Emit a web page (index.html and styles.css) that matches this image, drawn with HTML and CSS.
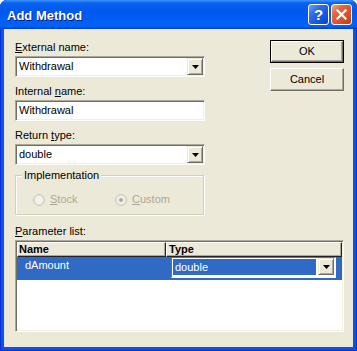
FILE: index.html
```html
<!DOCTYPE html>
<html>
<head>
<meta charset="utf-8">
<link rel="stylesheet" href="styles.css">
</head>
<body>
<div class="window">
  <div class="titlebar">
    <span class="title">Add Method</span>
    <div class="tb-btn help">?</div>
    <div class="tb-btn close">
      <svg width="11" height="11" viewBox="0 0 11 11"><path d="M1.5 1.5 L9.5 9.5 M9.5 1.5 L1.5 9.5" stroke="#fff" stroke-width="2.2" stroke-linecap="square" fill="none"/></svg>
    </div>
  </div>
  <div class="client">
    <div class="top">
      <div class="fields">
        <div class="lbl"><u>E</u>xternal name:</div>
        <div class="box combo">
          <div class="box-text">Withdrawal</div>
          <div class="dd"><svg width="7" height="4" viewBox="0 0 7 4"><path d="M0 0H7L3.5 4Z" fill="#000"/></svg></div>
        </div>
        <div class="lbl">Internal <u>n</u>ame:</div>
        <div class="box edit"><div class="box-text">Withdrawal</div></div>
        <div class="lbl">Return <u>t</u>ype:</div>
        <div class="box combo last">
          <div class="box-text">double</div>
          <div class="dd"><svg width="7" height="4" viewBox="0 0 7 4"><path d="M0 0H7L3.5 4Z" fill="#000"/></svg></div>
        </div>
        <fieldset class="group">
          <legend>Implementation</legend>
          <div class="radios">
            <div class="radio"><span class="circle"></span><span><u>S</u>tock</span></div>
            <div class="radio"><span class="circle checked"></span><span><u>C</u>ustom</span></div>
          </div>
        </fieldset>
      </div>
      <div class="buttons">
        <div class="btn default"><span class="btn-in">OK</span></div>
        <div class="btn"><span class="btn-in">Cancel</span></div>
      </div>
    </div>
    <div class="lbl plbl"><u>P</u>arameter list:</div>
    <div class="listview">
      <div class="header">
        <div class="hcell hname">Name</div>
        <div class="hcell htype">Type</div>
      </div>
      <div class="row">
        <div class="cell cname">dAmount</div>
        <div class="cell ctype">
          <div class="rcombo">
            <div class="rsel">double</div>
            <div class="dd rdd"><svg width="7" height="4" viewBox="0 0 7 4"><path d="M0 0H7L3.5 4Z" fill="#000"/></svg></div>
          </div>
        </div>
      </div>
    </div>
  </div>
</div>
</body>
</html>
```

FILE: styles.css
```css
html, body {
  margin: 0;
  padding: 0;
  background: #ffffff;
}
body {
  font-family: "Liberation Sans", Arial, sans-serif;
  font-size: 11px;
  color: #000;
}
.window {
  width: 357px;
  height: 351px;
  box-sizing: border-box;
  display: flex;
  flex-direction: column;
  background: #0B53E2;
  border-radius: 7px 7px 0 0;
  box-shadow: inset 1px 0 #0831D9, inset -1px 0 #0831D9, inset 0 -1px #0831D9;
  overflow: hidden;
}
.titlebar {
  height: 29px;
  flex: none;
  display: flex;
  align-items: center;
  padding: 0 5px 0 7px;
  background: linear-gradient(to bottom, #3D95FF 0%, #0A62F0 10%, #0058EE 40%, #0062F8 85%, #0060F6 92%, #0045D8 96%, #0040D4 100%);
  border-radius: 7px 7px 0 0;
}
.title {
  flex: 1;
  color: #fff;
  font: bold 13px "Liberation Sans", Arial, sans-serif;
  text-shadow: 1px 1px #0A1883;
  padding-top: 1px;
}
.tb-btn {
  width: 21px;
  height: 21px;
  box-sizing: border-box;
  border: 1px solid #fff;
  border-radius: 3px;
  margin-left: 2px;
  display: flex;
  align-items: center;
  justify-content: center;
}
.help {
  background: linear-gradient(135deg, #6E9CF8 0%, #2F6BEA 35%, #1A55DE 65%, #0A44CF 100%);
  color: #fff;
  font: bold 15px "Liberation Sans", Arial, sans-serif;
}
.close {
  background: linear-gradient(135deg, #F3A588 0%, #E5663F 30%, #DD4F25 65%, #C43C16 100%);
}
.client {
  flex: 1;
  margin: 0 4px 4px 4px;
  background: #ECE9D8;
  padding: 12px 9px 0 11px;
  display: flex;
  flex-direction: column;
}
.top {
  display: flex;
}
.fields {
  width: 190px;
  display: flex;
  flex-direction: column;
}
.lbl {
  line-height: 13px;
  height: 13px;
  margin-bottom: 2px;
  white-space: nowrap;
}
u {
  text-decoration: underline;
  text-underline-offset: 1px;
}
.box {
  height: 21px;
  box-sizing: border-box;
  border: 1px solid;
  border-color: #ACA899 #fff #fff #ACA899;
  box-shadow: inset 1px 1px #716F64, inset -1px -1px #F1EFE2;
  background: #fff;
  display: flex;
  padding: 1px;
  margin-bottom: 8px;
}
.box.last {
  margin-bottom: 4px;
}
.box-text {
  flex: 1;
  line-height: 17px;
  padding-left: 2px;
}
.dd {
  width: 16px;
  height: 17px;
  box-sizing: border-box;
  background: #ECE9D8;
  border: 1px solid;
  border-color: #ECE9D8 #716F64 #716F64 #ECE9D8;
  box-shadow: inset 1px 1px #fff, inset -1px -1px #ACA899;
  display: flex;
  align-items: center;
  justify-content: center;
}
.group {
  margin: 0;
  width: 189px;
  box-sizing: border-box;
  border: 1px solid #D0D0BF;
  box-shadow: inset 1px 1px #fff, 1px 1px #fff;
  padding: 11px 0 8px 0;
}
.group legend {
  margin-left: 6px;
  padding: 0 2px;
  line-height: 13px;
  background: #ECE9D8;
}
.radios {
  display: flex;
  padding-left: 17px;
}
.radio {
  width: 82px;
  display: flex;
  align-items: center;
  gap: 5px;
  color: #ACA899;
  line-height: 13px;
}
.circle {
  width: 12px;
  height: 12px;
  box-sizing: border-box;
  border-radius: 50%;
  border: 1px solid #CBC8B9;
  box-shadow: inset 0 0 0 1px #E2E0D3;
  background: #F3F2EC;
  display: flex;
  align-items: center;
  justify-content: center;
}
.circle.checked::after {
  content: "";
  width: 4px;
  height: 4px;
  border-radius: 50%;
  background: #ACA899;
}
.buttons {
  margin-left: auto;
  margin-top: -1px;
  width: 74px;
  display: flex;
  flex-direction: column;
  gap: 5px;
}
.btn {
  height: 23px;
  box-sizing: border-box;
  border: 1px solid;
  border-color: #fff #716F64 #716F64 #fff;
  box-shadow: inset -1px -1px #ACA899;
  display: flex;
}
.btn-in {
  flex: 1;
  display: flex;
  align-items: center;
  justify-content: center;
  padding-bottom: 1px;
}
.btn.default {
  border: 1px solid #000;
  box-shadow: none;
}
.btn.default .btn-in {
  border: 1px solid;
  border-color: #fff #716F64 #716F64 #fff;
  box-shadow: inset -1px -1px #ACA899;
}
.plbl {
  margin-top: 10px;
}
.listview {
  height: 92px;
  box-sizing: border-box;
  border: 1px solid;
  border-color: #ACA899 #fff #fff #ACA899;
  box-shadow: inset 1px 1px #716F64, inset -1px -1px #F1EFE2;
  background: #fff;
  padding: 1px;
  display: flex;
  flex-direction: column;
}
.header {
  display: flex;
  height: 15px;
}
.hcell {
  box-sizing: border-box;
  height: 15px;
  border-top: 1px solid #fff;
  border-left: 1px solid #fff;
  border-right: 1px solid #222;
  border-bottom: 1px solid #222;
  box-shadow: inset -1px -1px #ACA899;
  background: #ECE9D8;
  font-weight: bold;
  line-height: 13px;
  padding-left: 1px;
}
.hname {
  width: 149px;
}
.htype {
  flex: 1;
  padding-left: 2px;
}
.row {
  height: 23px;
  background: #316AC5;
  display: flex;
}
.cell {
  box-sizing: border-box;
}
.cname {
  width: 149px;
  padding: 2px 0 0 8px;
  color: #fff;
  line-height: 13px;
}
.ctype {
  flex: 1;
  padding-left: 5px;
}
.rcombo {
  width: 165px;
  height: 21px;
  box-sizing: border-box;
  border: 1px solid;
  border-color: #716F64 #fff #fff #716F64;
  background: #fff;
  padding: 1px;
  display: flex;
  align-items: flex-start;
}
.rsel {
  flex: 1;
  height: 16px;
  background: #316AC5;
  color: #fff;
  line-height: 16px;
  padding-left: 2px;
  margin-right: 2px;
}
.rdd {
  height: 17px;
  margin-top: -1px;
}
```
